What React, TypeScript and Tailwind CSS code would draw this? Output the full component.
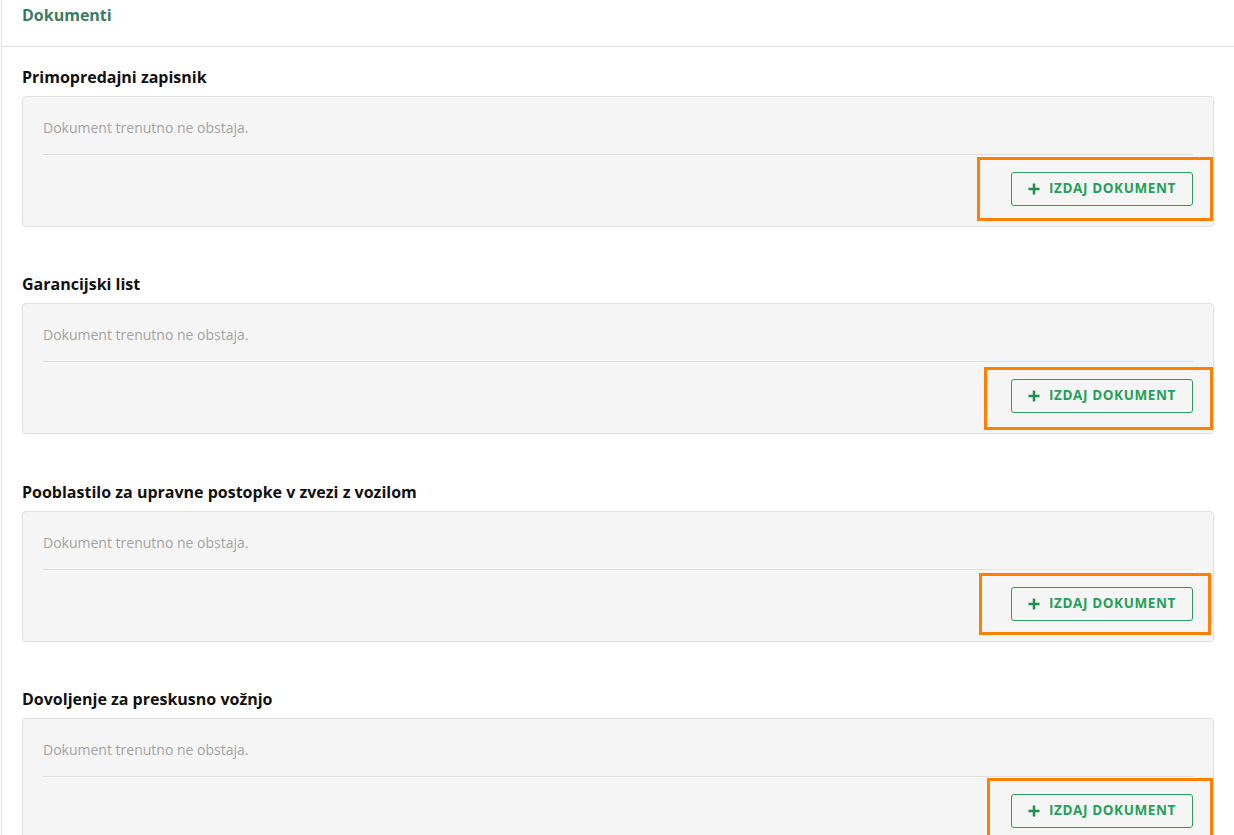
import React from "react";

type Sec = { title: string; mt: string; box: { left: number; top: number; width: number; height: number } };

const sections: Sec[] = [
  { title: "Primopredajni zapisnik", mt: "mt-0", box: { left: 954, top: 60, width: 236, height: 64 } },
  { title: "Garancijski list", mt: "mt-[47px]", box: { left: 961, top: 63, width: 229, height: 63 } },
  { title: "Pooblastilo za upravne postopke v zvezi z vozilom", mt: "mt-[48px]", box: { left: 956, top: 61, width: 232, height: 62 } },
  { title: "Dovoljenje za preskusno vožnjo", mt: "mt-[47px]", box: { left: 964, top: 59, width: 226, height: 64 } },
];

function PlusIcon() {
  return (
    <svg width="12" height="12" viewBox="0 0 12 12" className="shrink-0">
      <path d="M6 0.5v11M0.5 6h11" stroke="#1f8f4e" strokeWidth="2.5" strokeLinecap="butt" />
    </svg>
  );
}

export default function App() {
  return (
    <div
      className="min-h-[835px] w-[1233px] bg-white border-l border-[#e2e2e2] ml-[1px] overflow-hidden"
      style={{ fontFamily: '"Open Sans", "Noto Sans", sans-serif' }}
    >
      <div className="h-[47px] border-b border-[#dedede] pl-[20px] pt-[5px]">
        <div className="text-[16px] font-bold leading-[20px] text-[#3b7a66]">Dokumenti</div>
      </div>
      <div className="pl-[20px] pr-[20px] pt-[20px] flex flex-col">
        {sections.map((s) => (
          <div key={s.title} className={s.mt}>
            <div className="text-[16px] font-bold leading-[20px] text-[#111] mb-[9px]">{s.title}</div>
            <div className="relative bg-[#f5f5f5] border border-[#e0e0e0] rounded-[4px] px-[20px] pt-[21px] pb-[20px]">
              <div className="text-[14px] leading-[20px] text-[#a3a3a3]">Dokument trenutno ne obstaja.</div>
              <div className="h-px bg-[#e0e0e0] mt-[16px] mb-[17px]" />
              <div className="flex justify-end">
                <button className="h-[34px] w-[182px] border border-[#2a9d5f] rounded-[3px] flex items-center justify-center gap-[9px] pb-[1px] text-[13.5px] font-bold tracking-[0.6px] text-[#23a05a]">
                  <PlusIcon />
                  <span>IZDAJ DOKUMENT</span>
                </button>
              </div>
              <div
                className="absolute border-[3px] border-[#ff8000] pointer-events-none"
                style={{ left: s.box.left, top: s.box.top, width: s.box.width, height: s.box.height }}
              />
            </div>
          </div>
        ))}
      </div>
    </div>
  );
}
